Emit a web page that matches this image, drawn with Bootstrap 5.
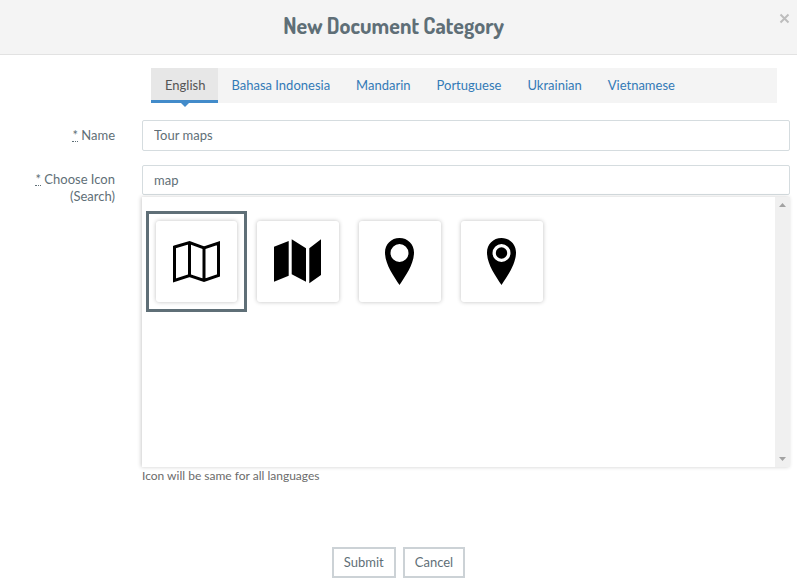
<!DOCTYPE html>
<html lang="en">
<head>
<meta charset="utf-8">
<meta name="viewport" content="width=device-width, initial-scale=1">
<title>New Document Category</title>
<link href="https://cdn.jsdelivr.net/npm/bootstrap@5.3.0/dist/css/bootstrap.min.css" rel="stylesheet">
<style>
body { font-family: Lato, "Liberation Sans", sans-serif; font-size: 13px; line-height: 17px; color: #5f6f77; }
.dialog-head { background: #f4f4f4; border-bottom: 1px solid #e2e2e2; padding: 11px 0 15px; }
.dialog-title { font-family: Dosis, Lato, sans-serif; font-size: 22px; line-height: 28px; font-weight: 700; color: #5f6f77; padding-right: 10px; }
.dialog-close { position: absolute; top: 9px; right: 3px; padding: 4px; line-height: 0; color: #bdbdbd; background: none; border: 0; }
.dialog-body { padding: 13px 7px 0 0; }
.lang-tabs { margin: 0 13px 17px 151px; background: #f4f4f4; }
.lang-tabs .nav-link { position: relative; height: 35px; padding: 9px 13px; color: #337ab7; border-radius: 0; border-bottom: 3px solid transparent; }
.lang-tabs .nav-link.active { color: #555; background: #e7e7e7; border-bottom-color: #428bca; padding-left: 14px; }
.lang-tabs .nav-link.active::after { content: ""; position: absolute; left: 50%; top: 100%; margin: 3px 0 0 -4px; border: 4px solid transparent; border-top-color: #428bca; border-bottom: 0; }
.side-label { width: 115px; margin-right: 27px; padding-top: 7px; text-align: right; flex: none; }
.side-label abbr { text-decoration: none; border-bottom: 1px dotted #5f6f77; cursor: help; display: inline-block; line-height: 12px; }
.text-field { height: 31px; padding: 4px 11px 6px; font-size: 13px; line-height: 19px; color: #5f6f77; border: 1px solid #d5dcdf; border-radius: 2px; }
.search-field { height: 30px; padding: 5px 11px; }
.form-line { margin-bottom: 14px; }
.search-line .side-label { padding-top: 6px; }
.icon-panel { height: 270px; margin-top: 2px; box-shadow: -1px 0 4px rgba(0, 0, 0, .2); background: #fff; }
.icon-list { padding: 14px 4px; }
.scroll-rail { width: 15px; padding: 6px 0; background: #f0f0f0; line-height: 0; color: #a2a2a2; }
.icon-choice { border: 0; background: none; padding: 10px; line-height: 0; }
.icon-choice.chosen { border: 3px solid #5f6f77; padding: 7px; }
.icon-tile { display: flex; align-items: center; justify-content: center; width: 82px; height: 81px; border-radius: 3px; background: #fff; box-shadow: 0 0 4px rgba(0, 0, 0, .25); color: #000; }
.chosen .icon-tile { width: 81px; }
.hint { font-size: 12px; color: #6b6b6b; }
.dialog-actions { padding: 63px 0 8px 7px; gap: 7px; }
.outline-btn { height: 31px; padding: 4px 10px; font-size: 13px; line-height: 19px; color: #5f6f77; background: #fff; border: 2px solid #ccd2d6; border-radius: 0; }
</style>
<script src="https://cdn.jsdelivr.net/npm/bootstrap@5.3.0/dist/js/bootstrap.bundle.min.js"></script>
</head>
<body>
<header class="dialog-head position-relative">
  <h1 class="dialog-title text-center m-0">New Document Category</h1>
  <button type="button" class="dialog-close" aria-label="Close">
    <svg width="11" height="11" viewBox="0 0 11 11"><path d="M1.500 1.500l8 8M9.500 1.500l-8 8" stroke="currentColor" stroke-width="2"/></svg>
  </button>
</header>
<form class="dialog-body">
  <nav class="nav lang-tabs" aria-label="Languages">
    <a class="nav-link active" aria-current="page" href="#en">English</a>
    <a class="nav-link" href="#id">Bahasa Indonesia</a>
    <a class="nav-link" href="#zh">Mandarin</a>
    <a class="nav-link" href="#pt">Portuguese</a>
    <a class="nav-link" href="#uk">Ukrainian</a>
    <a class="nav-link" href="#vi">Vietnamese</a>
  </nav>
  <div class="d-flex form-line">
    <label class="side-label" for="name"><abbr title="required">*</abbr> Name</label>
    <div class="flex-grow-1"><input class="form-control text-field" type="text" id="name" value="Tour maps"></div>
  </div>
  <div class="d-flex search-line">
    <label class="side-label" for="icon-search"><abbr title="required">*</abbr> Choose Icon (Search)</label>
    <div class="flex-grow-1">
      <input class="form-control text-field search-field" type="text" id="icon-search" value="map">
      <div class="icon-panel d-flex">
        <div class="icon-list d-flex flex-wrap align-content-start flex-grow-1">
          <button type="button" class="icon-choice chosen" aria-label="Map outline" aria-pressed="true"><span class="icon-tile">
            <svg width="48" height="48" viewBox="0 0 48 48"><path d="M1.500 9L16.500 4.500 31 10 45.500 5V37.500L31 42.500 16.500 37.500 1.500 42.500ZM16.500 4.500V37.500M31 10V42.500" fill="none" stroke="currentColor" stroke-width="3"/></svg>
          </span></button>
          <button type="button" class="icon-choice" aria-label="Map filled" aria-pressed="false"><span class="icon-tile">
            <svg width="48" height="48" viewBox="0 0 48 48"><path d="M0 8.700L14.700 3V37.700L0 43.700ZM17.700 1.300L32 10.300V43.700L17.700 36.300ZM35.300 10.300L47 1.300V37L35.300 45.300Z" fill="currentColor"/></svg>
          </span></button>
          <button type="button" class="icon-choice" aria-label="Map pin" aria-pressed="false"><span class="icon-tile">
            <svg width="48" height="48" viewBox="0 0 48 48"><path fill-rule="evenodd" d="M23.500 0C31.800 0 38 6.300 38 14.500 38 26 29.500 38 23.500 47 17.500 38 9 26 9 14.500 9 6.300 15.200 0 23.500 0ZM23.500 6A9 9 0 1 0 23.500 24 9 9 0 1 0 23.500 6Z" fill="currentColor"/></svg>
          </span></button>
          <button type="button" class="icon-choice" aria-label="Map pin with dot" aria-pressed="false"><span class="icon-tile">
            <svg width="48" height="48" viewBox="0 0 48 48"><path fill-rule="evenodd" d="M23.500 0C31.800 0 38 6.300 38 14.500 38 26 29.500 38 23.500 47 17.500 38 9 26 9 14.500 9 6.300 15.200 0 23.500 0ZM23.500 6A9 9 0 1 0 23.500 24 9 9 0 1 0 23.500 6Z" fill="currentColor"/><circle cx="23.500" cy="15" r="5.700" fill="currentColor"/></svg>
          </span></button>
        </div>
        <div class="scroll-rail d-flex flex-column justify-content-between align-items-center" aria-hidden="true">
          <svg width="7" height="4" viewBox="0 0 7 4"><path d="M0 4L3.500 0 7 4Z" fill="currentColor"/></svg>
          <svg width="7" height="4" viewBox="0 0 7 4"><path d="M0 0L3.500 4 7 0Z" fill="currentColor"/></svg>
        </div>
      </div>
      <div class="hint">Icon will be same for all languages</div>
    </div>
  </div>
  <div class="dialog-actions d-flex justify-content-center">
    <button type="submit" class="btn outline-btn">Submit</button>
    <button type="button" class="btn outline-btn">Cancel</button>
  </div>
</form>
</body>
</html>
